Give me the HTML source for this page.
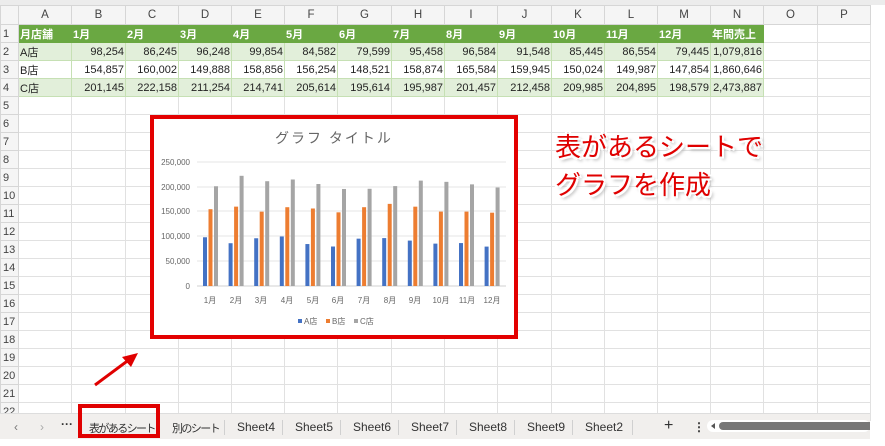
<!DOCTYPE html>
<html><head><meta charset="utf-8"><style>
*{margin:0;padding:0;box-sizing:border-box}
body{width:885px;height:446px;overflow:hidden;background:#fff;font-family:"Liberation Sans","Noto Sans CJK JP",sans-serif;position:relative}
table{border-collapse:collapse;position:absolute;left:0;top:5px;table-layout:fixed;width:870px}
td{border:1px solid #e1e1e1;height:18px;font-size:11px;color:#222;padding:0 1px;white-space:nowrap;overflow:hidden}
tr.hd td{background:#f5f5f5;color:#444;text-align:center;height:19px;border-color:#d6d6d6;font-size:11.5px}
td.rh{background:#f5f5f5;color:#444;text-align:left;padding-left:2px;border-color:#d6d6d6}
tr.g td.c{background:#6aa842;color:#fff;font-weight:bold;border-color:#6aa842}
tr.l td.c{background:#e2efda;text-align:right;border-color:#c6e0b4}
tr.w td.c{text-align:right;border-color:#c6e0b4}
td.t{text-align:left!important}
#topbar{position:absolute;left:0;top:0;width:885px;height:5px;background:#ececec}
#tabs{position:absolute;left:0;top:413px;width:870px;height:26px;background:#f1efed;border-top:1px solid #ddd;font-size:12px;color:#333}
#tabs span{position:absolute;top:6px}
#tabs span.jp{font-size:11px;letter-spacing:-1.6px;top:6px}
.sep{position:absolute;top:6px;width:1px;height:15px;background:#d0d0d0}
</style></head><body>
<div id="topbar"></div>
<table>
<colgroup><col style="width:18px"><col style="width:53px"><col style="width:54px"><col style="width:53px"><col style="width:53px"><col style="width:53px"><col style="width:53px"><col style="width:54px"><col style="width:53px"><col style="width:53px"><col style="width:54px"><col style="width:53px"><col style="width:53px"><col style="width:53px"><col style="width:53px"><col style="width:54px"><col style="width:53px"></colgroup>
<tr class="hd"><td></td><td>A</td><td>B</td><td>C</td><td>D</td><td>E</td><td>F</td><td>G</td><td>H</td><td>I</td><td>J</td><td>K</td><td>L</td><td>M</td><td>N</td><td>O</td><td>P</td></tr>
<tr class="g"><td class="rh">1</td><td class="c">月店舗</td><td class="c">1月</td><td class="c">2月</td><td class="c">3月</td><td class="c">4月</td><td class="c">5月</td><td class="c">6月</td><td class="c">7月</td><td class="c">8月</td><td class="c">9月</td><td class="c">10月</td><td class="c">11月</td><td class="c">12月</td><td class="c">年間売上</td><td></td><td></td></tr>
<tr class="l"><td class="rh">2</td><td class="c t">A店</td><td class="c">98,254</td><td class="c">86,245</td><td class="c">96,248</td><td class="c">99,854</td><td class="c">84,582</td><td class="c">79,599</td><td class="c">95,458</td><td class="c">96,584</td><td class="c">91,548</td><td class="c">85,445</td><td class="c">86,554</td><td class="c">79,445</td><td class="c">1,079,816</td><td></td><td></td></tr>
<tr class="w"><td class="rh">3</td><td class="c t">B店</td><td class="c">154,857</td><td class="c">160,002</td><td class="c">149,888</td><td class="c">158,856</td><td class="c">156,254</td><td class="c">148,521</td><td class="c">158,874</td><td class="c">165,584</td><td class="c">159,945</td><td class="c">150,024</td><td class="c">149,987</td><td class="c">147,854</td><td class="c">1,860,646</td><td></td><td></td></tr>
<tr class="l"><td class="rh">4</td><td class="c t">C店</td><td class="c">201,145</td><td class="c">222,158</td><td class="c">211,254</td><td class="c">214,741</td><td class="c">205,614</td><td class="c">195,614</td><td class="c">195,987</td><td class="c">201,457</td><td class="c">212,458</td><td class="c">209,985</td><td class="c">204,895</td><td class="c">198,579</td><td class="c">2,473,887</td><td></td><td></td></tr>
<tr><td class="rh">5</td><td></td><td></td><td></td><td></td><td></td><td></td><td></td><td></td><td></td><td></td><td></td><td></td><td></td><td></td><td></td><td></td></tr>
<tr><td class="rh">6</td><td></td><td></td><td></td><td></td><td></td><td></td><td></td><td></td><td></td><td></td><td></td><td></td><td></td><td></td><td></td><td></td></tr>
<tr><td class="rh">7</td><td></td><td></td><td></td><td></td><td></td><td></td><td></td><td></td><td></td><td></td><td></td><td></td><td></td><td></td><td></td><td></td></tr>
<tr><td class="rh">8</td><td></td><td></td><td></td><td></td><td></td><td></td><td></td><td></td><td></td><td></td><td></td><td></td><td></td><td></td><td></td><td></td></tr>
<tr><td class="rh">9</td><td></td><td></td><td></td><td></td><td></td><td></td><td></td><td></td><td></td><td></td><td></td><td></td><td></td><td></td><td></td><td></td></tr>
<tr><td class="rh">10</td><td></td><td></td><td></td><td></td><td></td><td></td><td></td><td></td><td></td><td></td><td></td><td></td><td></td><td></td><td></td><td></td></tr>
<tr><td class="rh">11</td><td></td><td></td><td></td><td></td><td></td><td></td><td></td><td></td><td></td><td></td><td></td><td></td><td></td><td></td><td></td><td></td></tr>
<tr><td class="rh">12</td><td></td><td></td><td></td><td></td><td></td><td></td><td></td><td></td><td></td><td></td><td></td><td></td><td></td><td></td><td></td><td></td></tr>
<tr><td class="rh">13</td><td></td><td></td><td></td><td></td><td></td><td></td><td></td><td></td><td></td><td></td><td></td><td></td><td></td><td></td><td></td><td></td></tr>
<tr><td class="rh">14</td><td></td><td></td><td></td><td></td><td></td><td></td><td></td><td></td><td></td><td></td><td></td><td></td><td></td><td></td><td></td><td></td></tr>
<tr><td class="rh">15</td><td></td><td></td><td></td><td></td><td></td><td></td><td></td><td></td><td></td><td></td><td></td><td></td><td></td><td></td><td></td><td></td></tr>
<tr><td class="rh">16</td><td></td><td></td><td></td><td></td><td></td><td></td><td></td><td></td><td></td><td></td><td></td><td></td><td></td><td></td><td></td><td></td></tr>
<tr><td class="rh">17</td><td></td><td></td><td></td><td></td><td></td><td></td><td></td><td></td><td></td><td></td><td></td><td></td><td></td><td></td><td></td><td></td></tr>
<tr><td class="rh">18</td><td></td><td></td><td></td><td></td><td></td><td></td><td></td><td></td><td></td><td></td><td></td><td></td><td></td><td></td><td></td><td></td></tr>
<tr><td class="rh">19</td><td></td><td></td><td></td><td></td><td></td><td></td><td></td><td></td><td></td><td></td><td></td><td></td><td></td><td></td><td></td><td></td></tr>
<tr><td class="rh">20</td><td></td><td></td><td></td><td></td><td></td><td></td><td></td><td></td><td></td><td></td><td></td><td></td><td></td><td></td><td></td><td></td></tr>
<tr><td class="rh">21</td><td></td><td></td><td></td><td></td><td></td><td></td><td></td><td></td><td></td><td></td><td></td><td></td><td></td><td></td><td></td><td></td></tr>
<tr><td class="rh">22</td><td></td><td></td><td></td><td></td><td></td><td></td><td></td><td></td><td></td><td></td><td></td><td></td><td></td><td></td><td></td><td></td></tr>
</table>

<svg style="position:absolute;left:150px;top:115px" width="368" height="224" viewBox="0 0 368 224">
<rect x="2" y="2" width="364" height="220" fill="#fff" stroke="#e30000" stroke-width="4"/>
<text x="184" y="28" text-anchor="middle" font-size="14" fill="#666" font-family="Liberation Sans,Noto Sans CJK JP,sans-serif" letter-spacing="2">グラフ タイトル</text>
<g stroke="#e6e6e6" stroke-width="1">
<line x1="47" y1="47" x2="356" y2="47"/><line x1="47" y1="72" x2="356" y2="72"/><line x1="47" y1="96" x2="356" y2="96"/><line x1="47" y1="121" x2="356" y2="121"/><line x1="47" y1="146" x2="356" y2="146"/><line x1="47" y1="171" x2="356" y2="171" stroke="#d0d0d0"/>
</g>
<g font-size="8" fill="#666" text-anchor="end" font-family="Liberation Sans,sans-serif">
<text x="40" y="50">250,000</text><text x="40" y="75">200,000</text><text x="40" y="99">150,000</text><text x="40" y="124">100,000</text><text x="40" y="149">50,000</text><text x="40" y="174">0</text>
</g>
<g id="bars"></g>
<g font-size="8" fill="#666" text-anchor="middle" font-family="Liberation Sans,Noto Sans CJK JP,sans-serif">
<text x="60" y="188">1月</text><text x="86" y="188">2月</text><text x="111" y="188">3月</text><text x="137" y="188">4月</text><text x="163" y="188">5月</text><text x="188" y="188">6月</text><text x="214" y="188">7月</text><text x="240" y="188">8月</text><text x="265" y="188">9月</text><text x="291" y="188">10月</text><text x="317" y="188">11月</text><text x="342" y="188">12月</text>
</g>
<g font-size="8" fill="#666" font-family="Liberation Sans,Noto Sans CJK JP,sans-serif">
<rect x="148" y="204" width="4" height="4" fill="#4472c4"/><text x="154" y="209">A店</text>
<rect x="176" y="204" width="4" height="4" fill="#ed7d31"/><text x="182" y="209">B店</text>
<rect x="204" y="204" width="4" height="4" fill="#a5a5a5"/><text x="210" y="209">C店</text>
</g>
</svg>
<script>
var A=[98254,86245,96248,99854,84582,79599,95458,96584,91548,85445,86554,79445],
B=[154857,160002,149888,158856,156254,148521,158874,165584,159945,150024,149987,147854],
C=[201145,222158,211254,214741,205614,195614,195987,201457,212458,209985,204895,198579];
var g=document.getElementById('bars'),s='',col=['#4472c4','#ed7d31','#a5a5a5'];
for(var i=0;i<12;i++){[A,B,C].forEach(function(d,k){var h=d[i]/250000*124;var x=53+i*25.6+k*5.5;s+='<rect x="'+x+'" y="'+(171-h)+'" width="4" height="'+h+'" fill="'+col[k]+'"/>';});}
g.innerHTML=s;
</script>

<div style="position:absolute;left:555px;top:127px;font-size:26px;line-height:38px;color:#e00000;font-family:'Noto Sans CJK JP',sans-serif;text-shadow:2px 2px 0 #fff,-2px -2px 0 #fff,2px -2px 0 #fff,-2px 2px 0 #fff,3px 3px 3px #aaa">表があるシートで<br>グラフを作成</div>

<svg style="position:absolute;left:90px;top:350px" width="52" height="40"><line x1="5" y1="35" x2="40" y2="9" stroke="#e00000" stroke-width="3"/><polygon points="48,3 32,7 41,17" fill="#e00000"/></svg>

<div id="tabs">
<span style="left:14px;color:#777">&lsaquo;</span><span style="left:40px;color:#aaa">&rsaquo;</span><span style="left:61px;top:3px;font-weight:bold">···</span>
<span class="jp" style="left:89px">表があるシート</span>
<div style="position:absolute;left:88px;top:20px;width:64px;height:2px;background:#3f8f5a"></div>
<span class="jp" style="left:172px">別のシート</span><div class="sep" style="left:224px"></div>
<span style="left:237px">Sheet4</span><div class="sep" style="left:282px"></div>
<span style="left:295px">Sheet5</span><div class="sep" style="left:340px"></div>
<span style="left:353px">Sheet6</span><div class="sep" style="left:398px"></div>
<span style="left:411px">Sheet7</span><div class="sep" style="left:456px"></div>
<span style="left:469px">Sheet8</span><div class="sep" style="left:514px"></div>
<span style="left:527px">Sheet9</span><div class="sep" style="left:572px"></div>
<span style="left:585px">Sheet2</span><div class="sep" style="left:632px"></div>
<span style="left:664px;top:3px;font-size:16px">+</span><span style="left:693px;font-weight:bold">⋮</span>
<div style="position:absolute;left:707px;top:6px;width:163px;height:12px;background:#fff;border-radius:6px"></div>
<div style="position:absolute;left:711px;top:9px;width:0;height:0;border-top:3px solid transparent;border-bottom:3px solid transparent;border-right:4px solid #555"></div>
<div style="position:absolute;left:719px;top:8px;width:151px;height:8px;background:#777;border-radius:4px 0 0 4px"></div>
</div>
<div style="position:absolute;left:78px;top:404px;width:82px;height:34px;border:4px solid #e00000"></div>
</body></html>
